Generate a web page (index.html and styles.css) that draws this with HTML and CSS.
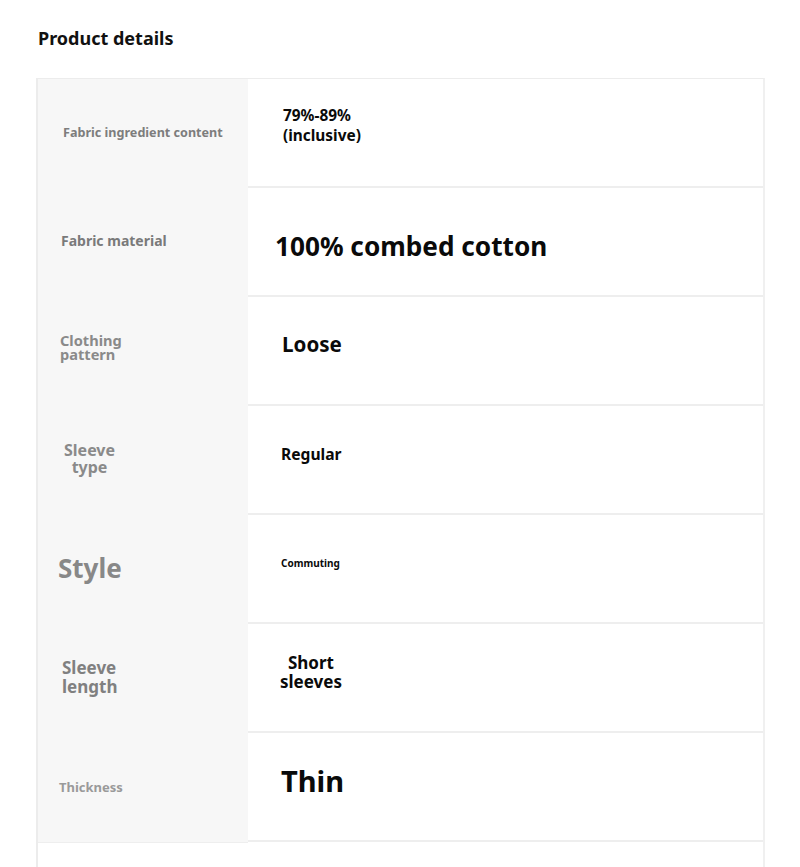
FILE: index.html
```html
<!DOCTYPE html>
<html>
<head>
<meta charset="utf-8">
<link rel="stylesheet" href="styles.css">
</head>
<body>
<div class="page">
  <h1 class="title">Product details</h1>
  <div class="table">
    <div class="row">
      <div class="label l1">Fabric ingredient content</div>
      <div class="value v1">79%-89%<br>(inclusive)</div>
    </div>
    <div class="row">
      <div class="label l2">Fabric material</div>
      <div class="value v2">100% combed cotton</div>
    </div>
    <div class="row">
      <div class="label l3">Clothing<br>pattern</div>
      <div class="value v3">Loose</div>
    </div>
    <div class="row">
      <div class="label l4">Sleeve<br>type</div>
      <div class="value v4">Regular</div>
    </div>
    <div class="row">
      <div class="label l5">Style</div>
      <div class="value v5">Commuting</div>
    </div>
    <div class="row">
      <div class="label l6">Sleeve<br>length</div>
      <div class="value v6">Short<br>sleeves</div>
    </div>
    <div class="row">
      <div class="label l7">Thickness</div>
      <div class="value v7">Thin</div>
    </div>
    <div class="row row-empty">
      <div class="label-empty"></div>
      <div class="value"></div>
    </div>
  </div>
</div>
</body>
</html>
```

FILE: styles.css
```css
* { box-sizing: border-box; }
html, body { margin: 0; padding: 0; background: #fff; }
body {
  font-family: "Noto Sans", "Open Sans", sans-serif;
  font-weight: 700;
  overflow: hidden;
  height: 867px;
}
.page { padding: 0 35px 0 36px; }
.title {
  margin: 0;
  padding: 26px 0 0 2px;
  height: 78px;
  font-size: 18px;
  line-height: 24px;
  font-weight: 700;
  color: #111;
}
.table {
  border-top: 1px solid #ececec;
  border-left: 2px solid #ececec;
  border-right: 2px solid #f0f0f0;
}
.row {
  display: grid;
  grid-template-columns: 210px 1fr;
  height: 109px;
}
.label {
  background: #f7f7f7;
  color: #858585;
  display: flex;
  align-items: center;
  padding-left: 24px;
}
.label-empty { background: #fff; border-top: 1px solid #eee; }
.value {
  display: flex;
  align-items: center;
  color: #0a0a0a;
  border-bottom: 2px solid #eeeeee;
}
.row-empty .value { border-bottom: none; }
.l1 { font-size: 12.6px; padding-left: 25px; padding-bottom: 2px; color: #7d7d7d; }
.v1 { font-size: 15.4px; line-height: 20px; padding-left: 35px; padding-bottom: 13px; }
.l2 { font-size: 14px; padding-left: 23px; padding-bottom: 4px; color: #7a7a7a; }
.v2 { font-size: 26.2px; padding-left: 27px; padding-top: 8px; }
.l3 { font-size: 14.6px; line-height: 14px; padding-left: 22px; padding-bottom: 10px; color: #8a8a8a; }
.v3 { font-size: 20.6px; padding-left: 34px; padding-bottom: 14px; }
.l4 { font-size: 16px; line-height: 17px; padding-left: 26px; text-align: center; padding-bottom: 4px; color: #8a8a8a; }
.v4 { font-size: 15.6px; padding-left: 33px; padding-bottom: 12px; }
.l5 { font-size: 26px; padding-left: 20px; padding-bottom: 4px; color: #888; }
.v5 { font-size: 10px; padding-left: 33px; padding-bottom: 12px; }
.l6 { font-size: 17px; line-height: 19px; padding-left: 24px; padding-bottom: 4px; color: #808080; }
.v6 { font-size: 17px; line-height: 19px; padding-left: 32px; padding-bottom: 12px; text-align: center; }
.l7 { font-size: 13px; padding-left: 21px; padding-bottom: 2px; color: #9a9a9a; }
.v7 { font-size: 29px; padding-left: 33px; padding-bottom: 12px; }
```
